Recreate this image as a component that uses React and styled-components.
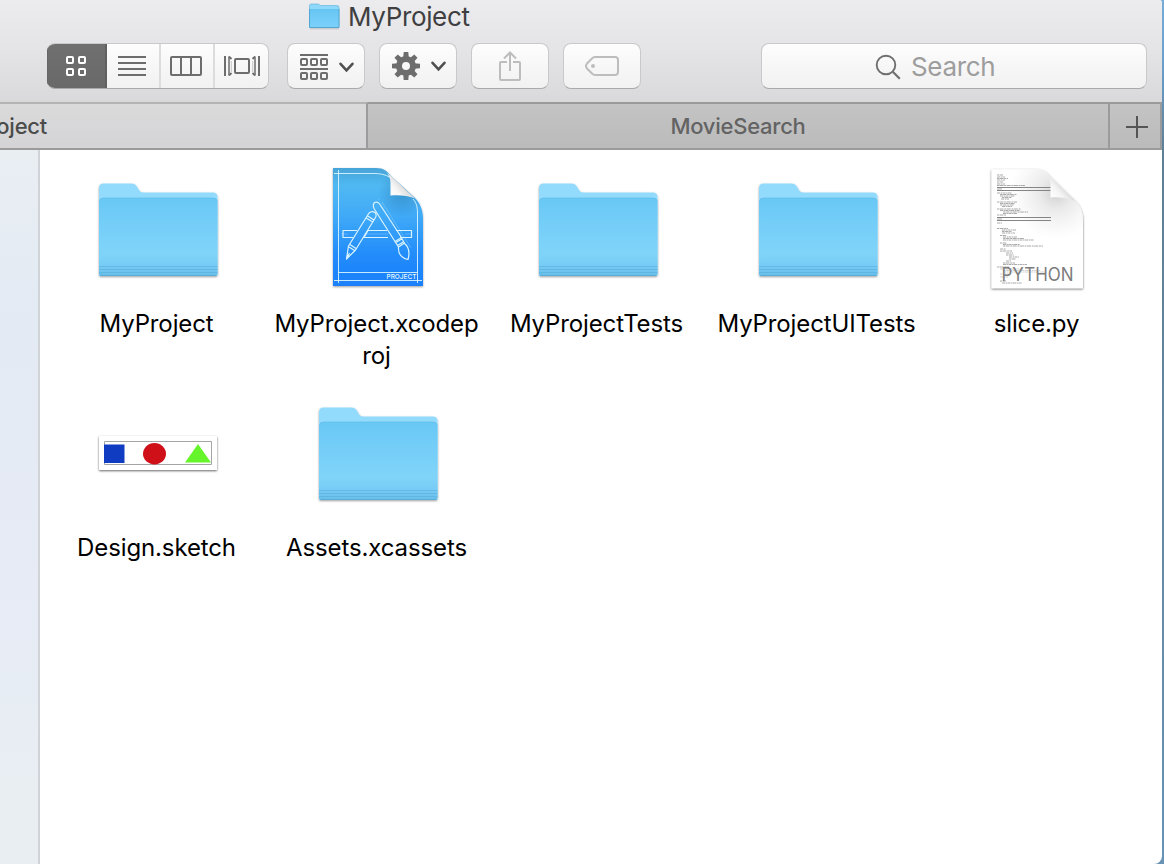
import React from "react";
import styled, { createGlobalStyle } from "styled-components";

const GlobalStyle = createGlobalStyle`
  *, *::before, *::after { box-sizing: border-box; }
  body { margin: 0; overflow: hidden; font-family: Inter, "Liberation Sans", sans-serif; }
  svg { display: block; flex: none; }
`;

const Desktop = styled.div`
  width: 1164px;
  height: 864px;
  padding-right: 2px;
  overflow: hidden;
  background: linear-gradient(to bottom, #78abd6 0, #6d9fca 60px, #5d8099 150px, #6288a4 500px, #6893b5 864px);
`;

const Window = styled.div`
  display: flex;
  flex-direction: column;
  width: 1162px;
  height: 864px;
  overflow: hidden;
  background: #fff;
  border-radius: 0 3px 8px 0;
`;

const Header = styled.header`
  height: 102px;
  flex: none;
  background: linear-gradient(#ececee, #e4e4e6 50%, #d9d9db);
`;

const TitleBar = styled.div`
  display: flex;
  align-items: center;
  gap: 8px;
  height: 34px;
  padding-left: 309px;
`;

const Title = styled.h1`
  margin: 0;
  font-size: 26px;
  font-weight: 400;
  line-height: 34px;
  letter-spacing: -0.35px;
  color: #3f3f41;
`;

const Toolbar = styled.div`
  display: flex;
  padding: 9px 15px 0 47px;
  height: 55px;
`;

const surface = `
  background: linear-gradient(#fdfdfd, #f1f1f1);
  border: 1px solid #c9c9cb;
  border-bottom-color: #a9a9ab;
  border-radius: 8px;
`;

const Segments = styled.div`
  display: flex;
  width: 222px;
  height: 46px;
  overflow: hidden;
  margin-right: 18px;
  ${surface}
  border-left: 0;
`;

const Segment = styled.button`
  display: flex;
  align-items: center;
  justify-content: center;
  width: ${(p) => p.$width}px;
  flex: none;
  height: 46px;
  margin-top: -1px;
  padding: ${(p) => p.$pad || "0"};
  border: 0;
  border-right: ${(p) => (p.$last ? "0" : "2px solid #dcdcdc")};
  background: transparent;
  color: #6d6d6d;
  ${(p) => p.$active && `
    color: #fff;
    background: linear-gradient(#707070, #696969);
    border-right-color: #606060;
    box-shadow: inset 0 1px #626262, inset 0 -1px #626262, inset 1px 0 #666;
  `}
`;

const ToolButton = styled.button`
  display: flex;
  align-items: center;
  justify-content: center;
  gap: 10px;
  width: 78px;
  height: 46px;
  padding: ${(p) => p.$pad || "0"};
  margin-right: 14px;
  color: ${(p) => (p.$disabled ? "#bdbdbd" : "#6d6d6d")};
  ${surface}
`;

const SearchField = styled.div`
  display: flex;
  align-items: center;
  gap: 9px;
  width: 386px;
  height: 46px;
  margin-left: auto;
  padding: 2px 0 0 113px;
  font-size: 26px;
  line-height: 42px;
  letter-spacing: -0.35px;
  color: #9d9d9d;
  ${surface}
`;

const TabBar = styled.nav`
  display: flex;
  flex: none;
  height: 48px;
  border-top: 2px solid #9b9b9b;
  border-bottom: 2px solid #9b9b9b;
  border-right: 2px solid #9b9b9b;
`;

const Tab = styled.div`
  display: flex;
  align-items: center;
  justify-content: ${(p) => (p.$active ? "flex-start" : "center")};
  width: ${(p) => p.$width}px;
  height: ${(p) => (p.$active ? 46 : 44)}px;
  margin-top: ${(p) => (p.$active ? -2 : 0)}px;
  border-top: ${(p) => (p.$active ? "2px solid #b4b4b5" : "0")};
  border-right: 2px solid #9b9b9b;
  background: ${(p) => (p.$active ? "linear-gradient(#dadadb, #d4d4d6)" : "linear-gradient(#c4c4c4, #bfbfc0 50%, #bbbbbb)")};
  color: ${(p) => (p.$active ? "#4b4b4b" : "#636363")};
  font-size: 22px;
  font-weight: 500;
  letter-spacing: -0.25px;
`;

const ClippedLabel = styled.span`
  display: flex;
  justify-content: flex-end;
  width: 47px;
`;

const AddTab = styled.button`
  display: flex;
  align-items: center;
  justify-content: center;
  flex: 1;
  padding: 2px 0 0 4px;
  border: 0;
  color: #555;
  background: linear-gradient(#c4c4c4, #bfbfc0 50%, #bbbbbb);
`;

const Body = styled.div`
  display: flex;
  flex: 1;
`;

const Sidebar = styled.aside`
  width: 40px;
  border-right: 2px solid #d0d4d8;
  background: linear-gradient(#e8eef2 0, #e4eaf4 25%, #e6ebf6 60%, #e8eef2 90%);
`;

const FileGrid = styled.main`
  display: grid;
  grid-template-columns: repeat(5, 220px);
  grid-auto-rows: 224px;
  align-content: start;
  padding: 16px 0 0 8px;
`;

const FileItem = styled.figure`
  display: flex;
  flex-direction: column;
  align-items: center;
  gap: 14px;
  margin: 0;
`;

const FileName = styled.figcaption`
  padding-right: 3px;
  font-size: 24px;
  line-height: 32px;
  letter-spacing: -0.12px;
  text-align: center;
  white-space: pre;
  color: #000;
`;

const FolderIcon = () => (
  <svg width="128" height="128" viewBox="0 0 128 128">
    <defs>
      <linearGradient id="front" x1="0" y1="0" x2="0" y2="1">
        <stop offset="0" stopColor="#69c8f5" />
        <stop offset=".72" stopColor="#80d4fa" />
        <stop offset=".86" stopColor="#76ccf4" />
        <stop offset="1" stopColor="#69beea" />
      </linearGradient>
      <filter id="drop" x="-10%" y="-10%" width="120%" height="125%">
        <feDropShadow dx="0" dy="1" stdDeviation="1" floodOpacity=".38" />
      </filter>
    </defs>
    <g filter="url(#drop)">
      <path d="M5 108V22q0-4.500 4.500-4.500H37c3.500 0 5 1.500 6.500 4 1.500 3 3 5 6 5h69.500q4.500 0 4.500 4.500v77q0 2-2 2H7q-2 0-2-2z" fill="#93dbfd" />
      <path d="M5 108V36q0-4 4-4h110.500q4 0 4 4v72q0 2-2 2H7q-2 0-2-2z" fill="url(#front)" />
    </g>
    <path d="M5.500 35q1-3 4-3h109.500q3 0 4 3" fill="none" stroke="#5eb8e4" strokeWidth=".6" />
    <path d="M5 100.500h118.500M5 103.500h118.500M5 106.500h118.500" stroke="#55abd9" strokeWidth="1" opacity=".5" />
    <path d="M6 109.500h116.500" stroke="#56a9d4" strokeWidth="1" opacity=".8" />
  </svg>
);

const SmallFolder = () => (
  <svg width="31" height="28" viewBox="0 0 31 28">
    <defs>
      <linearGradient id="mini" x1="0" y1="0" x2="0" y2="1">
        <stop offset="0" stopColor="#67c5f3" />
        <stop offset="1" stopColor="#7ad1fa" />
      </linearGradient>
    </defs>
    <path d="M1 25.800h29" stroke="#aaa" opacity=".65" />
    <path d="M.5 24V2.500q0-1.500 1.500-1.500h7q1.500 0 2 1.500h17q2 0 2 2V24q0 .5-1 .5H1.500q-1 0-1-.5z" fill="#8dd8fb" stroke="#68b6da" strokeWidth=".7" />
    <path d="M.5 6h29.500v18.500H.5z" fill="url(#mini)" />
    <path d="M.5 6v18.500h29.500V6" fill="none" stroke="#50a4ce" strokeWidth=".9" />
  </svg>
);

const ProjectIcon = () => (
  <svg width="128" height="128" viewBox="0 0 128 128">
    <defs>
      <linearGradient id="blue" x1="0" y1="0" x2="0" y2="1">
        <stop offset="0" stopColor="#47a4d7" />
        <stop offset=".15" stopColor="#50b9f3" />
        <stop offset=".4" stopColor="#40aaf7" />
        <stop offset=".75" stopColor="#218bfb" />
        <stop offset="1" stopColor="#1b80fa" />
      </linearGradient>
      <linearGradient id="fold" x1="76" y1="30" x2="89" y2="19" gradientUnits="userSpaceOnUse">
        <stop offset="0" stopColor="#fff" />
        <stop offset=".5" stopColor="#f6f6f6" />
        <stop offset="1" stopColor="#dadada" />
      </linearGradient>
      <radialGradient id="foldShade" cx="88" cy="27" r="24" gradientUnits="userSpaceOnUse">
        <stop offset="0" stopColor="#14507e" stopOpacity=".32" />
        <stop offset="1" stopColor="#14507e" stopOpacity="0" />
      </radialGradient>
    </defs>
    <g filter="url(#drop)">
      <path d="M19 2h43c8 0 11 3 15 8l23 21c6 6 9 12 9 23v66H19z" fill="url(#blue)" />
    </g>
    <path d="M19 2h43c8 0 11 3 15 8l23 21c6 6 9 12 9 23v66H19z" fill="url(#foldShade)" />
    <g fill="none" stroke="#d9f4ff" strokeWidth="1">
      <path d="M24.500 4v113M20 7.500h40c6 0 12 1 16 4M99 33c3.500 4 4.500 8 4.500 14v70M20 114.500h88M24.500 106.500h79" opacity=".9" />
      <g strokeWidth="1.200" strokeLinejoin="round">
        <path d="M43 64.500H29v7h10M56 64.500h12M73 64.500h-2M82 64.500h15.500v7H86M74 71.500H50l4-7h17" />
        <path d="M60.500 36.500q3.500-1.500 5.500 2l21.500 33-6.500 4-21-33q-1.500-4 .5-6z" />
        <path d="M55 47q3-2.500 6-.5 2 2 .5 5L41.500 84l-9 9 2-13zM53 49.500l7 4.500M52 52l7 4M36 78.500l6 4M35 81l5.500 3.500M32.500 93l3-6" />
        <path d="M82 76.500l6.500-4M83.500 79.500l6.500-4M81 75.500l3.500 5.500 6-4-3-5M84.500 81c-.5 7 3 11 9.500 12.500 2-7 .5-13-4-16.500" />
      </g>
      <path d="M64 34l1-1M68 36l29 46M27 68h7M50 68h24M91 68h7" opacity=".25" />
    </g>
    <path d="M69 4c5 3 7.500 7 7.500 13V29.500c9-.7 17 0 24.500 3L77 10z" fill="url(#fold)" />
    <text x="72.500" y="113" fontSize="6.600" fontWeight="500" textLength="30" lengthAdjust="spacingAndGlyphs" fill="#e5f8ff" fontFamily="Inter, sans-serif">PROJECT</text>
  </svg>
);

const codeLines = [
  [9, 0, 6], [11, 0, 8], [12.500, 0, 11], [14, 0, 8], [16, 0, 6], [18, 0, 8], [19.500, 0, 28],
  [27, 0, 15], [28.500, 3, 17], [30, 3, 15], [31.500, 5, 10], [33, 4, 8],
  [36, 0, 20], [37.500, 3, 15], [39, 3, 14], [40.500, 5, 10],
  [43, 0, 24], [44.500, 3, 20], [46, 6, 25], [47.500, 6, 14], [49, 0, 9],
  [57, 0, 5],
  [62.500, 0, 11], [64, 5, 14], [65.500, 5, 10], [67, 5, 13],
  [69.500, 3, 6], [71, 6, 14], [72.500, 6, 21], [74, 6, 31],
  [77, 3, 7], [78.500, 6, 17], [80, 6, 40],
  [83, 3, 6], [85, 3, 12], [87, 9, 7], [89, 9, 8], [91, 12, 10], [93, 12, 7], [95, 9, 5], [97, 6, 12], [98.500, 6, 24],
  [101, 0, 12], [103, 3, 23], [104.500, 6, 37], [106, 6, 44],
  [108, 3, 10], [111, 3, 8], [115, 3, 6], [117, 5, 20],
];

const PythonIcon = () => (
  <svg width="128" height="128" viewBox="0 0 128 128">
    <defs>
      <radialGradient id="paperShade" cx="82" cy="27" r="46" gradientUnits="userSpaceOnUse">
        <stop offset="0" stopColor="#a8a8a8" stopOpacity=".55" />
        <stop offset=".35" stopColor="#b8b8b8" stopOpacity=".3" />
        <stop offset="1" stopColor="#ccc" stopOpacity="0" />
      </radialGradient>
      <filter id="pageDrop" x="-10%" y="-10%" width="120%" height="125%">
        <feDropShadow dx="0" dy="1" stdDeviation="1.200" floodOpacity=".6" />
      </filter>
    </defs>
    <path filter="url(#pageDrop)" d="M17.500 3.300H62c8 0 11 3 15 8l23 22c6 6 9 12 9 22v67h-91.500z" fill="#fff" />
    <path d="M17.500 3.300H62c8 0 11 3 15 8l23 22c6 6 9 12 9 22v67h-91.500z" fill="url(#paperShade)" />
    {codeLines.map(([y, indent, width], i) => (
      <path key={i} d={`M${23 + indent} ${y}h${width}`} stroke="#707070" strokeWidth=".9" strokeDasharray={i % 2 ? "3 .6 1.5 .4" : "2 .5 4 .7"} opacity={y > 102 && y < 115 ? 0.35 : 0.65} />
    ))}
    <path d="M23 23h5M23 53h5" stroke="#888" strokeWidth=".7" />
    <path d="M23 21.500h54M23 24.500h54M23 51.500h54M23 54.500h54" stroke="#858585" strokeWidth="1" />
    <path d="M69 5.300c5 3 7.500 7 7.500 13V31.500c9-.7 17.500.5 25.500 4L77 11.300z" fill="url(#fold)" />
    <text x="27.500" y="114.500" fontSize="18" textLength="72" lengthAdjust="spacingAndGlyphs" fill="#7c7c7c" fontFamily="Inter, sans-serif">PYTHON</text>
  </svg>
);

const SketchIcon = () => (
  <svg width="128" height="128" viewBox="0 0 128 128">
    <path filter="url(#pageDrop)" d="M5 46h118v34H5z" fill="#fff" />
    <path d="M10.500 51.500h107v23h-107z" fill="#fff" stroke="#a5a5a5" />
    <path d="M10 54.500h20.500V73H10z" fill="#103cc2" />
    <ellipse cx="60.500" cy="63.800" rx="11.500" ry="10.700" fill="#cf1019" />
    <path d="M104 54l13 18.500H91z" fill="#66f52b" />
  </svg>
);

const ChevronIcon = () => (
  <svg width="17" height="12" viewBox="0 0 17 12">
    <path d="M2.500 2.800l6 6.500 6-6.500" fill="none" stroke="#505050" strokeWidth="2.600" strokeLinecap="round" />
  </svg>
);

const GridIcon = () => (
  <svg width="22" height="22" viewBox="0 0 22 22" fill="none" stroke="currentColor" strokeWidth="2">
    {[2, 14].map((x) => [2, 14].map((y) => <rect key={`${x}-${y}`} x={x} y={y} width="6" height="6" rx="1" />))}
  </svg>
);

const ListIcon = () => (
  <svg width="28" height="20" viewBox="0 0 28 20" stroke="currentColor" strokeWidth="2">
    <path d="M0 1h28M0 7h28M0 13h28M0 19h28" />
  </svg>
);

const ColumnsIcon = () => (
  <svg width="32" height="20" viewBox="0 0 32 20" fill="none" stroke="currentColor" strokeWidth="2">
    <rect x="1" y="1" width="30" height="18" rx="1" />
    <path d="M11 1v18M21 1v18" />
  </svg>
);

const CoverFlowIcon = () => (
  <svg width="36" height="20" viewBox="0 0 36 20" fill="none" stroke="currentColor">
    <path d="M1 0v20M35 0v20" strokeWidth="2" />
    <path d="M5 .5v19M31 .5v19" strokeWidth="1.500" />
    <path d="M5 .5l2.500 2.500M5 19.500l2.500-2.500M31 .5L28.500 3M31 19.500L28.500 17" strokeWidth="1.800" />
    <path d="M7.300 5v11M28.700 5v11" strokeWidth=".6" opacity=".6" />
    <rect x="11" y="3" width="14" height="14" rx="1" strokeWidth="2" />
  </svg>
);

const ArrangeIcon = () => (
  <svg width="28" height="26" viewBox="0 0 28 26" fill="none" stroke="currentColor" strokeWidth="2">
    <path d="M0 1h28M0 15h28" />
    {[1, 11, 21].map((x) => [5, 19].map((y) => <rect key={`${x}-${y}`} x={x} y={y} width="6" height="6" rx="1" />))}
  </svg>
);

const GearIcon = () => (
  <svg width="28" height="28" viewBox="0 0 28 28" fill="none" stroke="currentColor">
    <circle cx="14" cy="14" r="7" strokeWidth="6" />
    {[0, 45, 90, 135, 180, 225, 270, 315].map((a) => (
      <path key={a} d="M11.200 6l.5-6h4.600l.5 6z" fill="currentColor" stroke="none" transform={`rotate(${a} 14 14)`} />
    ))}
  </svg>
);

const ShareIcon = () => (
  <svg width="22" height="30" viewBox="0 0 22 30" fill="none" stroke="currentColor" strokeWidth="2">
    <path d="M8 11H2q-1 0-1 1v16q0 1 1 1h18q1 0 1-1V12q0-1-1-1h-6M11 20V1.500M5 7.500l6-6 6 6" />
  </svg>
);

const TagIcon = () => (
  <svg width="34" height="20" viewBox="0 0 34 20" fill="none" stroke="currentColor" strokeWidth="2">
    <path d="M10 1h20q3 0 3 3v12q0 3-3 3H10q-1.500 0-3-1.500L2 12.500q-2-2.500 0-5L7 2.500Q8.500 1 10 1z" />
    <circle cx="8" cy="10" r="2" fill="currentColor" stroke="none" />
  </svg>
);

const SearchIcon = () => (
  <svg width="27" height="26" viewBox="0 0 27 26" fill="none" stroke="#6f6f6f" strokeWidth="1.900">
    <circle cx="11" cy="11" r="9.300" />
    <path d="M17.800 17.800l7 7" strokeWidth="2.200" />
  </svg>
);

const PlusIcon = () => (
  <svg width="22" height="22" viewBox="0 0 22 22" stroke="currentColor" strokeWidth="2">
    <path d="M11 0v22M0 11h22" />
  </svg>
);

const files = [
  { name: "MyProject", Icon: FolderIcon },
  { name: "MyProject.xcodep\nroj", Icon: ProjectIcon },
  { name: "MyProjectTests", Icon: FolderIcon },
  { name: "MyProjectUITests", Icon: FolderIcon },
  { name: "slice.py", Icon: PythonIcon },
  { name: "Design.sketch", Icon: SketchIcon },
  { name: "Assets.xcassets", Icon: FolderIcon },
];

export default function App() {
  return (
    <Desktop>
      <GlobalStyle />
      <Window>
        <Header>
          <TitleBar>
            <SmallFolder />
            <Title>MyProject</Title>
          </TitleBar>
          <Toolbar>
            <Segments>
              <Segment $width={60} $active><GridIcon /></Segment>
              <Segment $width={54} $pad="0 2px 0 0"><ListIcon /></Segment>
              <Segment $width={54} $pad="0 2px 0 0"><ColumnsIcon /></Segment>
              <Segment $width={54} $last $pad="0 1px 0 0"><CoverFlowIcon /></Segment>
            </Segments>
            <ToolButton $pad="2px 0 0 2px"><ArrangeIcon /><ChevronIcon /></ToolButton>
            <ToolButton $pad="0 0 0 2px"><GearIcon /><ChevronIcon /></ToolButton>
            <ToolButton $disabled><ShareIcon /></ToolButton>
            <ToolButton $disabled><TagIcon /></ToolButton>
            <SearchField><SearchIcon /><span>Search</span></SearchField>
          </Toolbar>
        </Header>
        <TabBar>
          <Tab $active $width={368}><ClippedLabel>MyProject</ClippedLabel></Tab>
          <Tab $width={742}>MovieSearch</Tab>
          <AddTab><PlusIcon /></AddTab>
        </TabBar>
        <Body>
          <Sidebar />
          <FileGrid>
            {files.map(({ name, Icon }) => (
              <FileItem key={name}>
                <Icon />
                <FileName>{name}</FileName>
              </FileItem>
            ))}
          </FileGrid>
        </Body>
      </Window>
    </Desktop>
  );
}
